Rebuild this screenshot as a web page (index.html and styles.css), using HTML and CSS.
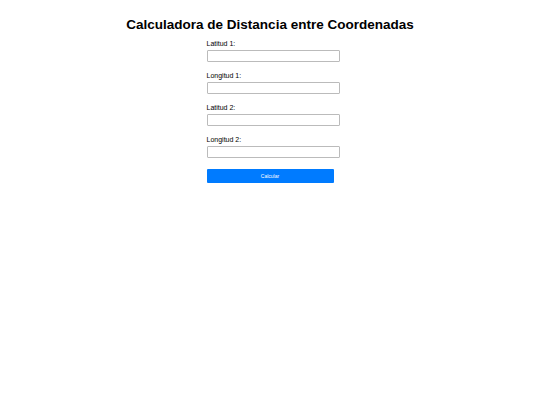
FILE: index.html
```html
<html>
	<head>
		<meta name="viewport" content="width=device-width, initial-scale=1">
		<title>Calculadora de Distancia</title>
		<link rel="stylesheet" href="styles.css">
	</head>
	<body>
		<h1>Calculadora de Distancia entre Coordenadas</h1>
		<form class="calc-form">
			<div class="field">
				<label for="lat1">Latitud 1:</label>
				<input id="lat1" type="text">
			</div>
			<div class="field">
				<label for="lon1">Longitud 1:</label>
				<input id="lon1" type="text">
			</div>
			<div class="field">
				<label for="lat2">Latitud 2:</label>
				<input id="lat2" type="text">
			</div>
			<div class="field">
				<label for="lon2">Longitud 2:</label>
				<input id="lon2" type="text">
			</div>
			<button type="button" class="calc-button">Calcular</button>
		</form>
	</body>
</html>
```

FILE: styles.css
```css
body {
	margin: 0;
	background: #fff;
	color: #000;
	font-family: "Liberation Sans", Arial, sans-serif;
}

h1 {
	margin: 17px 0 7px;
	font-size: 13.5px;
	line-height: 16px;
	text-align: center;
}

.calc-form {
	width: 127px;
	margin: 0 auto;
}

.field {
	margin-bottom: 10px;
}

.field label {
	display: block;
	font-size: 7px;
	line-height: 8px;
	margin-bottom: 2px;
}

.field input {
	display: block;
	box-sizing: border-box;
	width: 133px;
	height: 12px;
	margin: 0;
	padding: 0 2px;
	border: 1px solid #bbb;
	border-radius: 1px;
	background: #fff;
	font-size: 7px;
	outline: none;
}

.calc-button {
	display: block;
	box-sizing: border-box;
	width: 127px;
	height: 14px;
	margin-top: 11px;
	padding: 0;
	border: none;
	border-radius: 1px;
	background: #007bff;
	color: #fff;
	font-family: "Liberation Sans", Arial, sans-serif;
	font-size: 5px;
}
```
